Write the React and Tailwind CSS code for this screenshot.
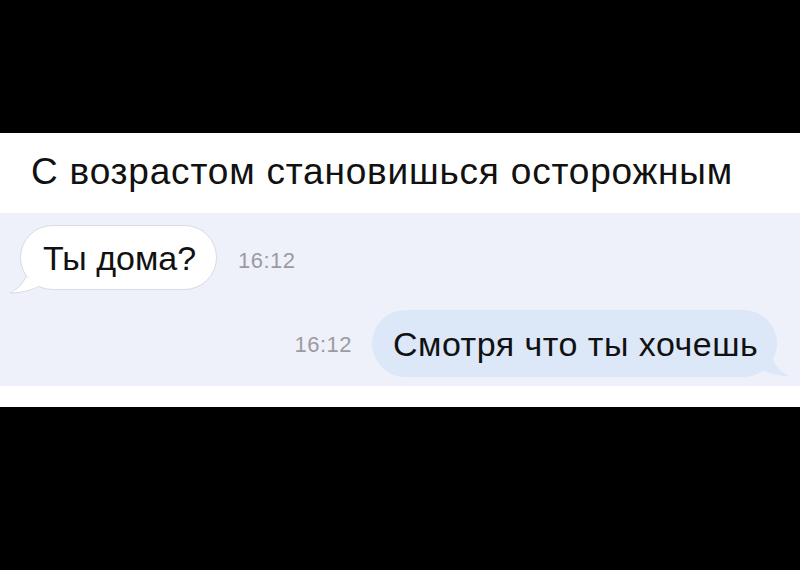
export default function App() {
  const font = { fontFamily: '"Liberation Sans", Arial, sans-serif' };
  return (
    <div className="w-[800px] h-[570px] bg-black flex flex-col overflow-hidden" style={font}>
      <div className="h-[133px] shrink-0" />
      <div className="h-[80px] shrink-0 bg-white flex items-center pl-[31px]">
        <span className="text-[37px] leading-none text-[#111] tracking-[0.8px] -mt-[4px]">С возрастом становишься осторожным</span>
      </div>
      <div className="h-[173px] shrink-0 bg-[#eef1fa] flex flex-col pt-[12px] gap-[20px]">
        <div className="flex items-center pl-[20px]">
          <div className="relative">
            <svg className="absolute left-[-11px] bottom-[-4px]" width="40" height="30" viewBox="0 0 40 30">
              <path d="M20 0 C 18 14, 14 22, 1 29 C 12 29, 22 26, 30 22 L 30 0 Z" fill="#ffffff" stroke="#d9dbe2" strokeWidth="1" />
            </svg>
            <div className="relative h-[65px] w-[197px] bg-white border border-[#d9dbe2] rounded-[33px] flex items-center pl-[22px]">
              <span className="text-[34px] leading-none text-[#111]">Ты дома?</span>
            </div>
            <div className="absolute left-[-10px] bottom-[-3px] w-[40px] h-[26px]">
              <svg width="40" height="26" viewBox="0 0 40 26">
                <path d="M21 0 C 19 12, 15 19, 2 25 C 13 25, 22 22, 31 18 L 31 0 Z" fill="#ffffff" />
              </svg>
            </div>
          </div>
          <span className="ml-[21px] mt-[7px] text-[22px] leading-none tracking-[0.5px] text-[#9b9ba0]">16:12</span>
        </div>
        <div className="flex items-center justify-end pr-[23px]">
          <span className="mr-[20px] mt-[3px] text-[22px] leading-none tracking-[0.5px] text-[#9b9ba0]">16:12</span>
          <div className="relative">
            <svg className="absolute right-[-13px] bottom-[0px]" width="40" height="30" viewBox="0 0 40 30">
              <path d="M20 0 C 22 14, 26 22, 39 29 C 28 29, 18 26, 10 22 L 10 0 Z" fill="#dce7f8" />
            </svg>
            <div className="relative h-[67px] w-[405px] bg-[#dce7f8] rounded-[34px] flex items-center pl-[21px]">
              <span className="text-[34px] leading-none tracking-[0.5px] text-[#111]">Смотря что ты хочешь</span>
            </div>
          </div>
        </div>
      </div>
      <div className="h-[21px] shrink-0 bg-white" />
    </div>
  );
}
